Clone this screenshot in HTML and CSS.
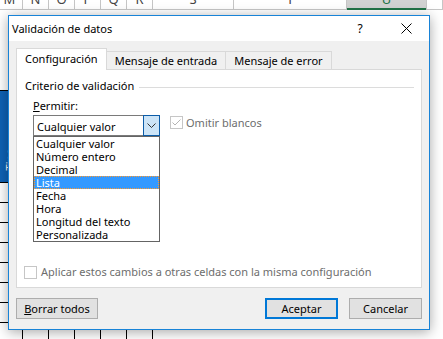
FILE: index.html
```html
<!DOCTYPE html>
<html lang="es">

<head>
  <meta charset="UTF-8">
  <title>Validación de datos</title>
  <link rel="stylesheet" href="styles.css">
</head>

<body>
  <div class="sheet">
    <div class="col-heads">
      <div class="col-head narrow">M</div>
      <div class="col-head narrow">N</div>
      <div class="col-head narrow">O</div>
      <div class="col-head narrow">P</div>
      <div class="col-head narrow">Q</div>
      <div class="col-head narrow">R</div>
      <div class="col-head col-s">S</div>
      <div class="col-head col-t">T</div>
      <div class="col-head col-u selected">U</div>
      <div class="col-head col-v"></div>
    </div>

    <div class="grid">
      <div class="cell merged"><span class="vtext">Tipo</span></div>
      <div class="cell"></div><div class="cell"></div><div class="cell"></div><div class="cell"></div><div class="cell"></div>
      <div class="cell"></div><div class="cell"></div><div class="cell"></div><div class="cell"></div><div class="cell"></div><div class="cell"></div>
      <div class="cell"></div><div class="cell"></div><div class="cell"></div><div class="cell"></div><div class="cell"></div><div class="cell"></div>
      <div class="cell"></div><div class="cell"></div><div class="cell"></div><div class="cell"></div><div class="cell"></div><div class="cell"></div>
      <div class="cell"></div><div class="cell"></div><div class="cell"></div><div class="cell"></div><div class="cell"></div><div class="cell"></div>
      <div class="cell"></div><div class="cell"></div><div class="cell"></div><div class="cell"></div><div class="cell"></div><div class="cell"></div>
      <div class="cell"></div><div class="cell"></div><div class="cell"></div><div class="cell"></div><div class="cell"></div><div class="cell"></div>
      <div class="cell"></div><div class="cell"></div><div class="cell"></div><div class="cell"></div><div class="cell"></div><div class="cell"></div>
      <div class="cell"></div><div class="cell"></div><div class="cell"></div><div class="cell"></div><div class="cell"></div><div class="cell"></div>
    </div>
  </div>

  <div class="dialog">
    <div class="titlebar">
      <span class="title">Validación de datos</span>
      <span class="help">?</span>
      <span class="close">
        <svg width="11" height="11" viewBox="0 0 11 11">
          <path d="M0.5 0.5L10.5 10.5M10.5 0.5L0.5 10.5" stroke="#000" stroke-width="1" fill="none" />
        </svg>
      </span>
    </div>

    <div class="dialog-body">
      <div class="tabs">
        <div class="tab active">Configuración</div>
        <div class="tab">Mensaje de entrada</div>
        <div class="tab">Mensaje de error</div>
      </div>

      <div class="panel">
        <div class="group-title">
          <span>Criterio de validación</span>
          <div class="rule"></div>
        </div>

        <div class="field-label"><u>P</u>ermitir:</div>

        <div class="field-row">
          <div class="combo-wrap">
            <div class="combo">
              <span class="combo-value">Cualquier valor</span>
              <span class="combo-btn">
                <svg width="9" height="5" viewBox="0 0 9 5">
                  <path d="M0.5 0.5L4.5 4.5L8.5 0.5" stroke="#333" stroke-width="1" fill="none" />
                </svg>
              </span>
            </div>
            <ul class="list">
              <li>Cualquier valor</li>
              <li>Número entero</li>
              <li>Decimal</li>
              <li class="selected">Lista</li>
              <li>Fecha</li>
              <li>Hora</li>
              <li>Longitud del texto</li>
              <li>Personalizada</li>
            </ul>
          </div>

          <label class="check omit">
            <span class="box">
              <svg width="11" height="11" viewBox="0 0 11 11">
                <path d="M1.5 5.5L4 8L9.5 2.5" stroke="#b4b4b4" stroke-width="1" fill="none" />
              </svg>
            </span>
            Omitir blancos
          </label>
        </div>

        <label class="check apply">
          <span class="box"></span>
          Aplicar estos cambios a otras celdas con la misma configuración
        </label>
      </div>

      <div class="buttons">
        <button class="btn wide"><u>B</u>orrar todos</button>
        <button class="btn default">Aceptar</button>
        <button class="btn">Cancelar</button>
      </div>
    </div>
  </div>
</body>

</html>
```

FILE: styles.css
```css
* {
  box-sizing: border-box;
}

html,
body {
  margin: 0;
}

body {
  position: relative;
  width: 443px;
  height: 339px;
  overflow: hidden;
  background: #fff;
  font-family: "Noto Sans", sans-serif;
  font-size: 11px;
  color: #000;
}

/* spreadsheet behind the dialog */

.col-heads {
  display: flex;
  height: 21px;
  margin: -11px 0 0 -3px;
  border-bottom: 1px solid #c6c6c6;
  color: #444;
  font-size: 13px;
  line-height: 20px;
}

.col-head {
  flex: none;
  border-right: 1px solid #c6c6c6;
  text-align: center;
}

.narrow {
  width: 26px;
}

.col-s {
  width: 81px;
}

.col-t {
  width: 113px;
}

.col-u {
  width: 80px;
}

.col-v {
  flex: 1;
}

.col-head.selected {
  margin-bottom: -1px;
  background: #d2d2d2;
  color: #217346;
  box-shadow: inset 0 -2px #217346;
}

.grid {
  display: grid;
  grid-template-columns: repeat(6, 25px);
  grid-template-rows: 91px;
  grid-auto-rows: 19px;
  gap: 1px;
  width: fit-content;
  margin: 80px 0 0 -3px;
  background: #000;
  border-top: 1px solid #000;
  border-right: 1px solid #000;
}

.cell {
  background: #fff;
}

.cell.merged {
  display: flex;
  align-items: flex-end;
  justify-content: center;
  padding-bottom: 12px;
  background: #0f62b5;
}

.vtext {
  writing-mode: vertical-rl;
  transform: rotate(180deg);
  color: #fff;
  font-size: 11px;
}

/* dialog */

.dialog {
  position: absolute;
  left: 8px;
  top: 15px;
  width: 422px;
  height: 315px;
  display: flex;
  flex-direction: column;
  border: 1px solid #1883d7;
  background: #f0f0f0;
  box-shadow: 0 2px 12px rgba(0, 0, 0, 0.35);
}

.titlebar {
  display: flex;
  align-items: center;
  height: 25px;
  padding-left: 3px;
  background: #fff;
  line-height: 16px;
}

.title {
  flex: 1;
}

.help {
  width: 30px;
  margin-right: 8px;
  text-align: center;
  font-size: 12px;
}

.close {
  display: flex;
  justify-content: center;
  width: 46px;
}

.dialog-body {
  flex: 1;
  display: flex;
  flex-direction: column;
  padding: 7px 7px 10px;
}

.tabs {
  display: flex;
  align-items: flex-end;
}

.tab {
  height: 18px;
  margin-left: -1px;
  padding: 1px 8px 0;
  border: 1px solid #d9d9d9;
  border-bottom: 0;
  line-height: 16px;
  background: #f0f0f0;
}

.tab.active {
  position: relative;
  z-index: 1;
  height: 22px;
  margin-left: 0;
  margin-bottom: -1px;
  padding-top: 2px;
  background: #fff;
}

.panel {
  flex: 1;
  display: flex;
  flex-direction: column;
  padding: 8px 7px 7px 8px;
  border: 1px solid #d9d9d9;
  background: #fff;
}

.group-title {
  display: flex;
  align-items: center;
  line-height: 16px;
}

.rule {
  flex: 1;
  height: 1px;
  margin: 2px 0 0 5px;
  background: #dcdcdc;
}

.field-label {
  margin: 4px 0 0 8px;
  line-height: 16px;
}

.field-row {
  display: flex;
  align-items: flex-start;
  margin: 1px 0 0 8px;
}

.combo-wrap {
  width: 127px;
}

.combo {
  display: flex;
  height: 21px;
  border: 1px solid #7a7a7a;
  background: #fff;
}

.combo-value {
  flex: 1;
  padding: 3px 0 0 3px;
  line-height: 16px;
}

.combo-btn {
  display: flex;
  align-items: center;
  justify-content: center;
  width: 17px;
  margin: -1px -1px -1px 0;
  border: 1px solid #0c5ca8;
  background: #cce4f7;
}

.list {
  margin: 0;
  padding: 0;
  list-style: none;
  border: 1px solid #646464;
  background: #fff;
}

.list li {
  height: 13px;
  padding-left: 2px;
  line-height: 13px;
  white-space: nowrap;
}

.list li.selected {
  background: #3399ff;
  color: #fff;
  outline: 1px dotted #ff9a2e;
  outline-offset: -1px;
}

.check {
  display: flex;
  align-items: flex-start;
  gap: 4px;
  color: #6d6d6d;
  line-height: 16px;
}

.box {
  flex: none;
  display: flex;
  align-items: center;
  justify-content: center;
  width: 13px;
  height: 13px;
  margin-top: 1px;
  border: 1px solid #c6c6c6;
  background: #fff;
}

.omit {
  margin-left: 10px;
  gap: 3px;
}

.apply {
  margin: auto 0 0 -1px;
  padding-top: 0;
}

.apply .box {
  margin-top: 2px;
}

.buttons {
  display: flex;
  gap: 11px;
  margin-top: 10px;
}

.btn {
  width: 73px;
  height: 21px;
  padding: 0;
  border: 1px solid #adadad;
  background: #e1e1e1;
  color: #000;
  font-family: "Noto Sans", sans-serif;
  font-size: 11px;
  line-height: 16px;
}

.btn.wide {
  width: 82px;
  margin-right: auto;
}

.btn.default {
  border: 2px solid #0078d7;
}
```
